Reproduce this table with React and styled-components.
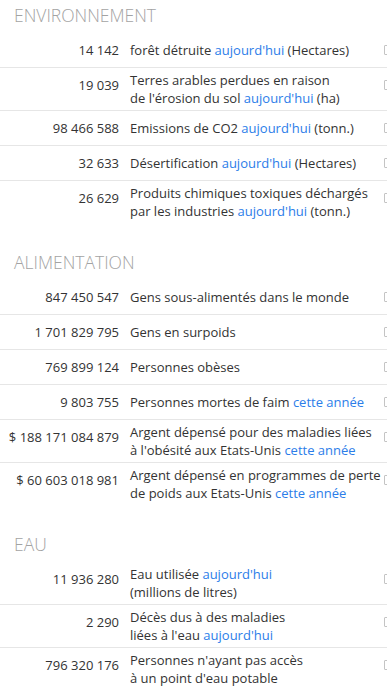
import React from 'react';
import styled, { createGlobalStyle } from 'styled-components';

const GlobalStyle = createGlobalStyle`
	html, body {
		margin: 0;
		padding: 0;
		background: #fff;
	}
	body {
		font-family: 'Open Sans', 'Noto Sans', sans-serif;
		color: #333;
	}
`;

const Page = styled.div`
	width: 387px;
	overflow: hidden;
`;

const Section = styled.section`
	margin-top: ${props => (props.first ? '0' : '24px')};
`;

const Heading = styled.h2`
	margin: 0 0 3px;
	padding-left: 14px;
	height: 30px;
	line-height: 30px;
	font-size: 17.5px;
	font-weight: 300;
	color: #a3a3a3;
`;

const Row = styled.div`
	display: grid;
	grid-template-columns: 119px 254px 30px;
	column-gap: 11px;
	align-items: start;
	padding: 3px 0;
	border-bottom: ${props => (props.last ? 'none' : '1px solid #e6e6e6')};
	font-size: 13px;
	line-height: 18px;
`;

const Count = styled.div`
	height: 28px;
	display: flex;
	align-items: center;
	justify-content: flex-end;
	white-space: nowrap;
	color: #333;
`;

const Label = styled.div`
	min-height: 28px;
	display: flex;
	align-items: center;
	white-space: nowrap;
	color: #333;
`;

const Link = styled.span`
	color: #2b7de9;
`;

const IconCell = styled.div`
	height: 28px;
	display: flex;
	align-items: center;
	margin-left: -11px;
`;

const Bracket = styled.span`
	display: block;
	width: 8px;
	height: 8px;
	border: 1px solid #c4c4c4;
	border-radius: 1px;
`;

const now = <Link>aujourd'hui</Link>;
const year = <Link>cette année</Link>;

const sections = [
	{
		title: 'ENVIRONNEMENT',
		rows: [
			['14 142', <>forêt détruite {now} (Hectares)</>],
			['19 039', <>Terres arables perdues en raison<br />de l'érosion du sol {now} (ha)</>],
			['98 466 588', <>Emissions de CO2 {now} (tonn.)</>],
			['32 633', <>Désertification {now} (Hectares)</>],
			['26 629', <>Produits chimiques toxiques déchargés<br />par les industries {now} (tonn.)</>],
		],
	},
	{
		title: 'ALIMENTATION',
		rows: [
			['847 450 547', <>Gens sous-alimentés dans le monde</>],
			['1 701 829 795', <>Gens en surpoids</>],
			['769 899 124', <>Personnes obèses</>],
			['9 803 755', <>Personnes mortes de faim {year}</>],
			['$ 188 171 084 879', <>Argent dépensé pour des maladies liées<br />à l'obésité aux Etats-Unis {year}</>],
			['$ 60 603 018 981', <>Argent dépensé en programmes de perte<br />de poids aux Etats-Unis {year}</>],
		],
	},
	{
		title: 'EAU',
		rows: [
			['11 936 280', <>Eau utilisée {now}<br />(millions de litres)</>],
			['2 290', <>Décès dus à des maladies<br />liées à l'eau {now}</>],
			['796 320 176', <>Personnes n'ayant pas accès<br />à un point d'eau potable</>],
		],
	},
];

const App = () => (
	<Page>
		<GlobalStyle />
		{sections.map((section, i) => (
			<Section key={section.title} first={i === 0}>
				<Heading>{section.title}</Heading>
				{section.rows.map(([count, label], j) => (
					<Row key={count} last={j === section.rows.length - 1}>
						<Count>{count}</Count>
						<Label><span>{label}</span></Label>
						<IconCell><Bracket /></IconCell>
					</Row>
				))}
			</Section>
		))}
	</Page>
);

export default App;
